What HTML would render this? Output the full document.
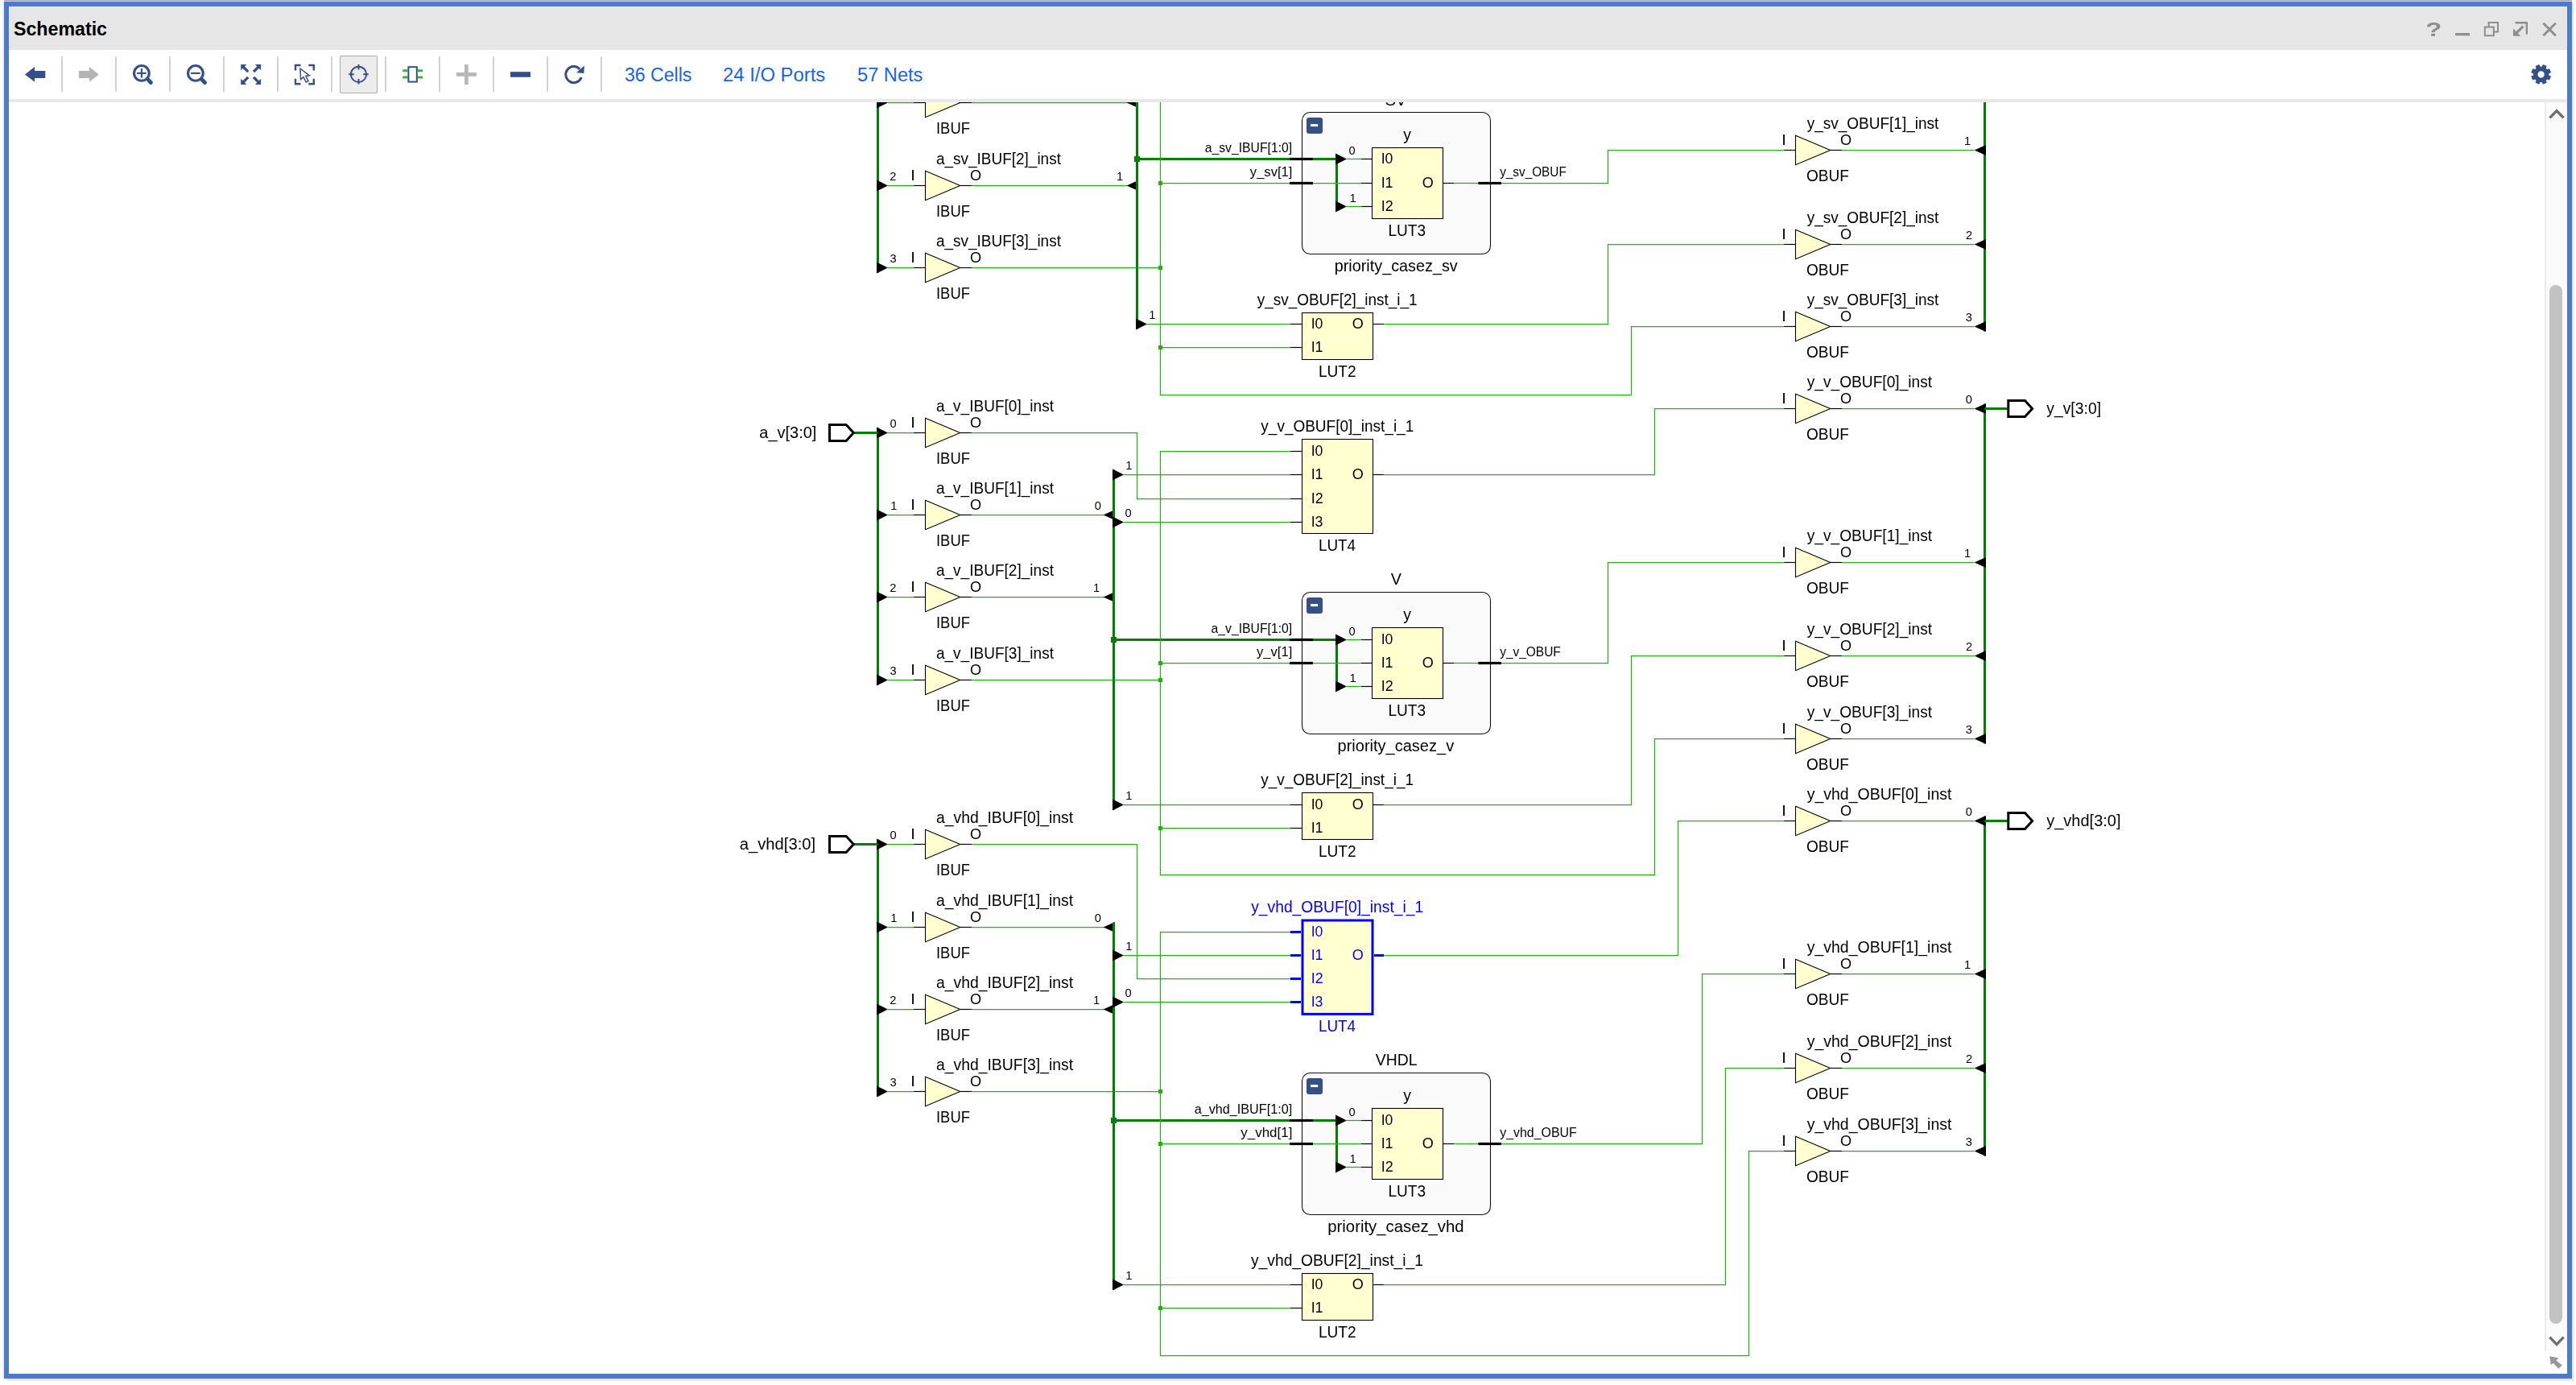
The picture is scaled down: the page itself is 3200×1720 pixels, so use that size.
<!DOCTYPE html>
<html><head><meta charset="utf-8"><title>Schematic</title>
<style>
html,body{margin:0;padding:0;background:#fff;overflow:hidden}
body{width:3200px;height:1720px;position:relative;font-family:"Liberation Sans",sans-serif}
.abs{position:absolute}
#frame{left:5px;top:2px;width:3190px;height:1710px;background:#4a7cce}
#shl{left:3px;top:2px;width:2px;height:1712px;background:linear-gradient(90deg,#f4f4f4,#e4e4e4)}
#sht{left:5px;top:0;width:3190px;height:1px;background:#a6a6a6}
#sht2{left:5px;top:1px;width:3190px;height:1px;background:#d6d6d2}
#shr{left:3195px;top:4px;width:3px;height:1712px;background:linear-gradient(90deg,#dcdcdc,#fafafa)}
#shb{left:8px;top:1712px;width:3188px;height:4px;background:linear-gradient(180deg,#d8d8d8,#fcfcfc)}
#title{left:11px;top:8px;width:3178px;height:54px;background:#e6e6e6}
#title b{position:absolute;left:5.6px;top:14.3px;font-size:24.6px;line-height:28px;font-weight:bold;color:#000;transform-origin:0 50%;transform:scaleX(0.943);white-space:nowrap}
#tool{left:11px;top:62px;width:3178px;height:61px;background:#fff}
#strip{left:11px;top:123px;width:3178px;height:4px;background:#e8e8e8}
#canvas{left:11px;top:127px;width:3178px;height:1579px;background:#fff}
.sep{position:absolute;top:70px;width:2px;height:44px;background:#d2d2d2}
#act{left:422px;top:69px;width:45px;height:45px;border:1px solid #ababab;background:#ececec;border-radius:2px}
.lnk{position:absolute;top:78.2px;font-size:24.2px;line-height:30px;color:#1463f0;white-space:nowrap;transform-origin:0 50%}
#sbar{left:3161px;top:127px;width:28px;height:1551px;background:#fafafa;border-left:2px solid #ebebeb;box-sizing:border-box}
#thumb{left:3167px;top:354px;width:16px;height:1290px;background:#c2c2c2;border-radius:8px}
svg{position:absolute;left:0;top:0;will-change:transform}
svg text{font-family:"Liberation Sans",sans-serif;white-space:pre}
.w{fill:none;stroke:#1eb40e;stroke-width:1.25}
.bus{fill:none;stroke:#008000;stroke-width:3}
.bk{fill:none;stroke:#000;stroke-width:1.2}
.bl{fill:none;stroke:#0000ff;stroke-width:3}
.bar{fill:none;stroke:#000;stroke-width:3.2}
.ar{fill:#000}
.jn{fill:#1eb40e}
.jb{fill:#008000}
.cell{fill:#ffffd0;stroke:#000;stroke-width:1.1}
.hier{fill:#fafafa;stroke:#111;stroke-width:1.1}
.port{fill:#fff;stroke:#000;stroke-width:3;stroke-linejoin:miter}
</style></head><body>
<div class="abs" id="shl"></div><div class="abs" id="sht"></div><div class="abs" id="sht2"></div><div class="abs" id="shr"></div><div class="abs" id="shb"></div>
<div class="abs" id="frame"></div>
<div class="abs" id="title"><b>Schematic</b></div>
<div class="abs" id="tool"></div>
<div class="abs" id="strip"></div>
<div class="abs" id="canvas"></div>
<div class="abs" id="act"></div>
<div class="sep" style="left:76px"></div>
<div class="sep" style="left:143px"></div>
<div class="sep" style="left:210px"></div>
<div class="sep" style="left:277px"></div>
<div class="sep" style="left:344px"></div>
<div class="sep" style="left:411px"></div>
<div class="sep" style="left:478px"></div>
<div class="sep" style="left:545px"></div>
<div class="sep" style="left:612px"></div>
<div class="sep" style="left:679px"></div>
<div class="sep" style="left:746px"></div>
<span class="lnk" style="left:775.6px;transform:scaleX(0.953)">36 Cells</span>
<span class="lnk" style="left:897.9px;transform:scaleX(0.986)">24 I/O Ports</span>
<span class="lnk" style="left:1064.9px;transform:scaleX(0.977)">57 Nets</span>
<div class="abs" id="sbar"></div><div class="abs" id="thumb"></div>
<svg width="3200" height="1720" viewBox="0 0 3200 1720">
<defs><clipPath id="cv"><rect x="11" y="127" width="3150" height="1579"/></clipPath></defs>
<g><path fill="#34508a" d="M31 92.4L43 83V88H56.3V97H43V101.8Z"/>
<path fill="#b4b4b4" d="M122.8 92.4L110.8 83V88H98V97H110.8V101.8Z"/>
<circle cx="175.9" cy="90.9" r="9.35" fill="none" stroke="#34508a" stroke-width="3.1"/><path d="M184.5 99.5L187.4 102.4" stroke="#34508a" stroke-width="5" stroke-linecap="round"/><path d="M170.1 90.9H181.7" stroke="#34508a" stroke-width="2.1"/><path d="M175.9 85.1V96.7" stroke="#34508a" stroke-width="2.1"/>
<circle cx="242.9" cy="90.9" r="9.35" fill="none" stroke="#34508a" stroke-width="3.1"/><path d="M251.5 99.5L254.4 102.4" stroke="#34508a" stroke-width="5" stroke-linecap="round"/><path d="M237.1 90.9H248.7" stroke="#34508a" stroke-width="2.1"/>
<path d="M308.25 89.1L302.05 82.9" stroke="#34508a" stroke-width="3.4"/><path fill="#34508a" d="M299.2 80L306.4 80L299.2 87.2Z"/><path d="M315.05 89.1L321.25 82.9" stroke="#34508a" stroke-width="3.4"/><path fill="#34508a" d="M324.1 80L316.9 80L324.1 87.2Z"/><path d="M308.25 95.9L302.05 102.1" stroke="#34508a" stroke-width="3.4"/><path fill="#34508a" d="M299.2 105L306.4 105L299.2 97.8Z"/><path d="M315.05 95.9L321.25 102.1" stroke="#34508a" stroke-width="3.4"/><path fill="#34508a" d="M324.1 105L316.9 105L324.1 97.8Z"/>
<path fill="none" stroke="#34508a" stroke-width="2.4" d="M373.5 81H367V87.5"/><path fill="none" stroke="#34508a" stroke-width="2.4" d="M383.3 81H389.8V87.5"/><path fill="none" stroke="#34508a" stroke-width="2.4" d="M373.5 104.2H367V97.7"/><path fill="none" stroke="#34508a" stroke-width="2.4" d="M383.3 104.2H389.8V97.7"/><path fill="#fff" stroke="#34508a" stroke-width="1.5" stroke-linejoin="miter" d="M373 85.2L373.6 98.6L377 95.6L380.2 102L383 100.6L379.8 94.4L384.4 93.8Z"/>
<circle cx="445.5" cy="92.3" r="9.6" fill="none" stroke="#34508a" stroke-width="2"/><path stroke="#34508a" stroke-width="2" d="M445.5 80V86.6M445.5 98V104.6M433.2 92.3H439.8M451.2 92.3H457.8"/>
<path stroke="#3cb043" stroke-width="3" d="M500.2 87.7H506.5M500.2 95.9H506.5M518.7 87.7H525M518.7 95.9H525"/><rect x="507.4" y="83.2" width="10.4" height="18.4" fill="#fff" stroke="#34508a" stroke-width="2"/>
<path stroke="#b8b8b8" stroke-width="4.8" d="M567 92.3H592M579.4 80V105"/>
<rect x="634" y="89.2" width="25" height="6.6" fill="#34508a"/>
<path fill="none" stroke="#34508a" stroke-width="3" d="M722.2 96.02A10 10 0 1 1 720.23 85.91"/><path fill="#34508a" d="M725.9 81.6L725.3 91L716 90.2Z"/>
<path fill="#34508a" fill-rule="evenodd" d="M3166.25 93.41L3168.97 94.8L3167.05 99.45L3164.14 98.5L3162.7 99.94L3163.65 102.85L3159 104.77L3157.61 102.05L3155.59 102.05L3154.2 104.77L3149.55 102.85L3150.5 99.94L3149.06 98.5L3146.15 99.45L3144.23 94.8L3146.95 93.41L3146.95 91.39L3144.23 90L3146.15 85.35L3149.06 86.3L3150.5 84.86L3149.55 81.95L3154.2 80.03L3155.59 82.75L3157.61 82.75L3159 80.03L3163.65 81.95L3162.7 84.86L3164.14 86.3L3167.05 85.35L3168.97 90L3166.25 91.39ZM3156.6 88.3a4.1 4.1 0 1 0 0.01 0Z"/></g>
<g><text transform="translate(3013.15 44.8) scale(1.3282 1)" font-size="24.6" font-weight="bold" fill="#8e8e8e">?</text>
<rect x="3050" y="41" width="18" height="3.2" fill="#8e8e8e"/>
<path fill="none" stroke="#8e8e8e" stroke-width="2" d="M3091.6 33.4V28H3103V39.6H3097.6"/><rect x="3086.8" y="33.6" width="11" height="10.6" fill="none" stroke="#8e8e8e" stroke-width="2"/>
<path fill="none" stroke="#8e8e8e" stroke-width="2.4" d="M3124.6 28.2H3138.8V42.6"/><path stroke="#8e8e8e" stroke-width="3.2" d="M3134.4 32.6L3126.6 40.4"/><path fill="#8e8e8e" d="M3122 44.8V35.4L3131.4 44.8Z"/>
<path stroke="#8e8e8e" stroke-width="3" d="M3159.4 28.8L3174.8 44.2M3174.8 28.8L3159.4 44.2"/></g>
<g><path fill="none" stroke="#6e6e6e" stroke-width="3.4" d="M3167.4 146.4L3176 137.6L3184.6 146.4"/>
<path fill="none" stroke="#6e6e6e" stroke-width="3.4" d="M3167.4 1660.6L3176 1669.6L3184.6 1660.6"/>
<path fill="#989898" d="M3167.2 1684.2L3178.6 1686.6L3175.4 1689.4L3182.8 1695.6L3178.2 1699.8L3171.6 1692.8L3168.8 1695.2Z"/></g>
<g clip-path="url(#cv)">
<path class="bus" d="M1090.5 100L1090.5 338.5"/>
<path class="ar" d="M1089 120.5L1103 127.5L1089 134.5Z"/>
<path class="w" d="M1102.5 127.5L1135 127.5"/>
<path class="bk" d="M1135 127.5L1149.5 127.5"/>
<path class="bk" d="M1193 127.5L1207.5 127.5"/>
<path class="cell" d="M1149.5 109.3L1192.8 127.5L1149.5 145.7Z"/>
<text transform="translate(1131.3 120.9) scale(1.1364 1)" font-size="17.6">I</text>
<text transform="translate(1205.04 121.1) scale(1.0323 1)" font-size="17.6">O</text>
<text transform="translate(1162.89 100.8) scale(0.9355 1)" font-size="20.3">a_sv_IBUF[1]_inst</text>
<text transform="translate(1163 165.8) scale(0.9071 1)" font-size="20.3">IBUF</text>
<text transform="translate(1106.3 120.9) scale(1.0324 1)" font-size="14.2">1</text>
<path class="ar" d="M1089 223.5L1103 230.5L1089 237.5Z"/>
<path class="w" d="M1102.5 230.5L1135 230.5"/>
<path class="bk" d="M1135 230.5L1149.5 230.5"/>
<path class="bk" d="M1193 230.5L1207.5 230.5"/>
<path class="cell" d="M1149.5 212.3L1192.8 230.5L1149.5 248.7Z"/>
<text transform="translate(1131.3 223.9) scale(1.1364 1)" font-size="17.6">I</text>
<text transform="translate(1205.04 224.1) scale(1.0323 1)" font-size="17.6">O</text>
<text transform="translate(1162.89 203.8) scale(0.9355 1)" font-size="20.3">a_sv_IBUF[2]_inst</text>
<text transform="translate(1163 268.8) scale(0.9071 1)" font-size="20.3">IBUF</text>
<text transform="translate(1105.37 223.9) scale(1.0324 1)" font-size="14.2">2</text>
<path class="ar" d="M1089 325.5L1103 332.5L1089 339.5Z"/>
<path class="w" d="M1102.5 332.5L1135 332.5"/>
<path class="bk" d="M1135 332.5L1149.5 332.5"/>
<path class="bk" d="M1193 332.5L1207.5 332.5"/>
<path class="cell" d="M1149.5 314.3L1192.8 332.5L1149.5 350.7Z"/>
<text transform="translate(1131.3 325.9) scale(1.1364 1)" font-size="17.6">I</text>
<text transform="translate(1205.04 326.1) scale(1.0323 1)" font-size="17.6">O</text>
<text transform="translate(1162.89 305.8) scale(0.9355 1)" font-size="20.3">a_sv_IBUF[3]_inst</text>
<text transform="translate(1163 370.8) scale(0.9071 1)" font-size="20.3">IBUF</text>
<text transform="translate(1105.55 325.9) scale(1.0324 1)" font-size="14.2">3</text>
<path class="w" d="M1207.5 127.5L1400.5 127.5"/>
<path class="ar" d="M1414 121L1399.5 127.5L1414 134Z"/>
<text transform="translate(1388.71 120.9) scale(1.0324 1)" font-size="14.2">0</text>
<path class="w" d="M1207.5 230.5L1400.5 230.5"/>
<path class="ar" d="M1414 224L1399.5 230.5L1414 237Z"/>
<text transform="translate(1386.96 223.9) scale(1.0324 1)" font-size="14.2">1</text>
<path class="w" d="M1207.5 332.5L1441.5 332.5"/>
<path class="bus" d="M1412.5 100L1412.5 408.5"/>
<path class="bus" d="M1412.5 197.5L1630 197.5"/>
<rect class="jb" x="1409" y="194" width="7" height="7"/>
<path class="ar" d="M1411 395.5L1425 402.5L1411 409.5Z"/>
<text transform="translate(1427.3 395.7) scale(1.0324 1)" font-size="14.2">1</text>
<path class="w" d="M1424.5 402.5L1602.9 402.5"/>
<path class="w" d="M1441.5 100L1441.5 490.5L2026.5 490.5L2026.5 405.5L2216 405.5"/>
<path class="w" d="M1441.5 227.5L1603 227.5"/>
<path class="w" d="M1441.5 431.5L1602.9 431.5"/>
<rect class="jn" x="1439" y="225" width="5" height="5"/>
<rect class="jn" x="1439" y="330" width="5" height="5"/>
<rect class="jn" x="1439" y="429" width="5" height="5"/>
<rect class="hier" x="1617.5" y="139.5" width="234" height="176" rx="10" ry="10"/>
<rect x="1623" y="146" width="20" height="20" rx="3" fill="#354f87"/>
<rect x="1628" y="154.1" width="9.2" height="3" fill="#fff"/>
<rect class="cell" x="1704.5" y="183.5" width="88" height="88"/>
<path class="bk" d="M1691 197.5L1704.5 197.5"/>
<text transform="translate(1715.67 203.2) scale(1.0029 1)" font-size="17.6">I0</text>
<path class="bk" d="M1691 227.5L1704.5 227.5"/>
<text transform="translate(1715.64 233.2) scale(1.0174 1)" font-size="17.6">I1</text>
<path class="bk" d="M1691 256.5L1704.5 256.5"/>
<text transform="translate(1715.64 262.2) scale(1.0211 1)" font-size="17.6">I2</text>
<path class="bk" d="M1792.5 227.5L1806.1 227.5"/>
<text transform="translate(1766.74 233.3) scale(1.0240 1)" font-size="17.6">O</text>
<text transform="translate(1724.43 292.7) scale(0.9385 1)" font-size="20.3">LUT3</text>
<text transform="translate(1743.15 173.9) scale(0.9554 1)" font-size="20.3">y</text>
<path class="bus" d="M1630 197.5L1660.5 197.5"/>
<path class="bus" d="M1660.5 197.5L1660.5 256.5"/>
<path class="ar" d="M1659 190.5L1673 197.5L1659 204.5Z"/>
<path class="ar" d="M1659 249.5L1673 256.5L1659 263.5Z"/>
<path class="w" d="M1672.5 197.5L1691 197.5"/>
<path class="w" d="M1672.5 256.5L1691 256.5"/>
<path class="w" d="M1630 227.5L1691 227.5"/>
<text transform="translate(1675.61 191.5) scale(1.0324 1)" font-size="14.2">0</text>
<text transform="translate(1676.4 250.5) scale(1.0324 1)" font-size="14.2">1</text>
<path class="bar" d="M1602.2 197.5L1630.9 197.5"/>
<path class="bar" d="M1602.2 227.5L1630.9 227.5"/>
<path class="w" d="M1806.1 227.5L1837 227.5"/>
<path class="bar" d="M1836.4 227.5L1865 227.5"/>
<text transform="translate(1720.39 131) scale(0.9967 1)" font-size="20.3">SV</text>
<text transform="translate(1657.71 336.5) scale(0.9762 1)" font-size="20.3">priority_casez_sv</text>
<text transform="translate(1496.63 188.8) scale(0.9733 1)" font-size="16.2">a_sv_IBUF[1:0]</text>
<text transform="translate(1552.86 219.1) scale(1.0232 1)" font-size="16.2">y_sv[1]</text>
<text transform="translate(1863.16 218.9) scale(0.9466 1)" font-size="16.2">y_sv_OBUF</text>
<path class="w" d="M1864.5 227.5L1997.5 227.5L1997.5 186.5L2216 186.5"/>
<rect class="cell" x="1617.5" y="388.5" width="88" height="58"/>
<path class="bk" d="M1602.9 402.5L1617.5 402.5"/>
<text transform="translate(1628.67 408.2) scale(1.0029 1)" font-size="17.6">I0</text>
<path class="bk" d="M1602.9 431.5L1617.5 431.5"/>
<text transform="translate(1628.64 437.2) scale(1.0174 1)" font-size="17.6">I1</text>
<path class="bk" d="M1705.5 402.5L1719.1 402.5"/>
<text transform="translate(1679.74 408.3) scale(1.0240 1)" font-size="17.6">O</text>
<text transform="translate(1561.85 378.7) scale(0.9325 1)" font-size="20.3">y_sv_OBUF[2]_inst_i_1</text>
<text transform="translate(1637.93 467.7) scale(0.9394 1)" font-size="20.3">LUT2</text>
<path class="w" d="M1719.1 402.5L1997.5 402.5L1997.5 303.5L2216 303.5"/>
<path class="bus" d="M2465.5 100L2465.5 411.5"/>
<path class="bk" d="M2216 186.5L2230.5 186.5"/>
<path class="bk" d="M2274 186.5L2288.5 186.5"/>
<path class="cell" d="M2230.5 168.3L2273.8 186.5L2230.5 204.7Z"/>
<text transform="translate(2213.3 179.9) scale(1.1364 1)" font-size="17.6">I</text>
<text transform="translate(2286.04 180.1) scale(1.0323 1)" font-size="17.6">O</text>
<text transform="translate(2244.65 159.8) scale(0.9360 1)" font-size="20.3">y_sv_OBUF[1]_inst</text>
<text transform="translate(2243.99 224.8) scale(0.9394 1)" font-size="20.3">OBUF</text>
<path class="w" d="M2288.5 186.5L2452.5 186.5"/>
<path class="ar" d="M2467 180L2452.5 186.5L2467 193Z"/>
<text transform="translate(2439.96 179.9) scale(1.0324 1)" font-size="14.2">1</text>
<path class="bk" d="M2216 303.5L2230.5 303.5"/>
<path class="bk" d="M2274 303.5L2288.5 303.5"/>
<path class="cell" d="M2230.5 285.3L2273.8 303.5L2230.5 321.7Z"/>
<text transform="translate(2213.3 296.9) scale(1.1364 1)" font-size="17.6">I</text>
<text transform="translate(2286.04 297.1) scale(1.0323 1)" font-size="17.6">O</text>
<text transform="translate(2244.65 276.8) scale(0.9360 1)" font-size="20.3">y_sv_OBUF[2]_inst</text>
<text transform="translate(2243.99 341.8) scale(0.9394 1)" font-size="20.3">OBUF</text>
<path class="w" d="M2288.5 303.5L2452.5 303.5"/>
<path class="ar" d="M2467 297L2452.5 303.5L2467 310Z"/>
<text transform="translate(2441.9 296.9) scale(1.0324 1)" font-size="14.2">2</text>
<path class="bk" d="M2216 405.5L2230.5 405.5"/>
<path class="bk" d="M2274 405.5L2288.5 405.5"/>
<path class="cell" d="M2230.5 387.3L2273.8 405.5L2230.5 423.7Z"/>
<text transform="translate(2213.3 398.9) scale(1.1364 1)" font-size="17.6">I</text>
<text transform="translate(2286.04 399.1) scale(1.0323 1)" font-size="17.6">O</text>
<text transform="translate(2244.65 378.8) scale(0.9360 1)" font-size="20.3">y_sv_OBUF[3]_inst</text>
<text transform="translate(2243.99 443.8) scale(0.9394 1)" font-size="20.3">OBUF</text>
<path class="w" d="M2288.5 405.5L2452.5 405.5"/>
<path class="ar" d="M2467 399L2452.5 405.5L2467 412Z"/>
<text transform="translate(2441.79 398.9) scale(1.0324 1)" font-size="14.2">3</text>
<path class="bus" d="M1090.5 531.5L1090.5 850.5"/>
<path class="ar" d="M1089 530.5L1103 537.5L1089 544.5Z"/>
<path class="w" d="M1102.5 537.5L1135 537.5"/>
<path class="bk" d="M1135 537.5L1149.5 537.5"/>
<path class="bk" d="M1193 537.5L1207.5 537.5"/>
<path class="cell" d="M1149.5 519.3L1192.8 537.5L1149.5 555.7Z"/>
<text transform="translate(1131.3 530.9) scale(1.1364 1)" font-size="17.6">I</text>
<text transform="translate(1205.04 531.1) scale(1.0323 1)" font-size="17.6">O</text>
<text transform="translate(1162.89 510.8) scale(0.9387 1)" font-size="20.3">a_v_IBUF[0]_inst</text>
<text transform="translate(1163 575.8) scale(0.9071 1)" font-size="20.3">IBUF</text>
<text transform="translate(1105.51 530.9) scale(1.0324 1)" font-size="14.2">0</text>
<path class="ar" d="M1089 632.5L1103 639.5L1089 646.5Z"/>
<path class="w" d="M1102.5 639.5L1135 639.5"/>
<path class="bk" d="M1135 639.5L1149.5 639.5"/>
<path class="bk" d="M1193 639.5L1207.5 639.5"/>
<path class="cell" d="M1149.5 621.3L1192.8 639.5L1149.5 657.7Z"/>
<text transform="translate(1131.3 632.9) scale(1.1364 1)" font-size="17.6">I</text>
<text transform="translate(1205.04 633.1) scale(1.0323 1)" font-size="17.6">O</text>
<text transform="translate(1162.89 612.8) scale(0.9387 1)" font-size="20.3">a_v_IBUF[1]_inst</text>
<text transform="translate(1163 677.8) scale(0.9071 1)" font-size="20.3">IBUF</text>
<text transform="translate(1106.3 632.9) scale(1.0324 1)" font-size="14.2">1</text>
<path class="ar" d="M1089 734.5L1103 741.5L1089 748.5Z"/>
<path class="w" d="M1102.5 741.5L1135 741.5"/>
<path class="bk" d="M1135 741.5L1149.5 741.5"/>
<path class="bk" d="M1193 741.5L1207.5 741.5"/>
<path class="cell" d="M1149.5 723.3L1192.8 741.5L1149.5 759.7Z"/>
<text transform="translate(1131.3 734.9) scale(1.1364 1)" font-size="17.6">I</text>
<text transform="translate(1205.04 735.1) scale(1.0323 1)" font-size="17.6">O</text>
<text transform="translate(1162.89 714.8) scale(0.9387 1)" font-size="20.3">a_v_IBUF[2]_inst</text>
<text transform="translate(1163 779.8) scale(0.9071 1)" font-size="20.3">IBUF</text>
<text transform="translate(1105.37 734.9) scale(1.0324 1)" font-size="14.2">2</text>
<path class="ar" d="M1089 837.5L1103 844.5L1089 851.5Z"/>
<path class="w" d="M1102.5 844.5L1135 844.5"/>
<path class="bk" d="M1135 844.5L1149.5 844.5"/>
<path class="bk" d="M1193 844.5L1207.5 844.5"/>
<path class="cell" d="M1149.5 826.3L1192.8 844.5L1149.5 862.7Z"/>
<text transform="translate(1131.3 837.9) scale(1.1364 1)" font-size="17.6">I</text>
<text transform="translate(1205.04 838.1) scale(1.0323 1)" font-size="17.6">O</text>
<text transform="translate(1162.89 817.8) scale(0.9387 1)" font-size="20.3">a_v_IBUF[3]_inst</text>
<text transform="translate(1163 882.8) scale(0.9071 1)" font-size="20.3">IBUF</text>
<text transform="translate(1105.55 837.9) scale(1.0324 1)" font-size="14.2">3</text>
<path class="bus" d="M1060 537.5L1090.5 537.5"/>
<path class="port" d="M1030.5 527.5H1051.2L1060.3 537.5L1051.2 547.5H1030.5Z"/>
<text transform="translate(943.35 544.4) scale(0.9838 1)" font-size="20.3">a_v[3:0]</text>
<path class="w" d="M1207.5 537.5L1412.5 537.5L1412.5 619.5L1602.9 619.5"/>
<path class="w" d="M1207.5 639.5L1371.5 639.5"/>
<path class="ar" d="M1385 633L1370.5 639.5L1385 646Z"/>
<text transform="translate(1359.71 632.9) scale(1.0324 1)" font-size="14.2">0</text>
<path class="w" d="M1207.5 741.5L1371.5 741.5"/>
<path class="ar" d="M1385 735L1370.5 741.5L1385 748Z"/>
<text transform="translate(1357.96 734.9) scale(1.0324 1)" font-size="14.2">1</text>
<path class="w" d="M1207.5 844.5L1441.5 844.5"/>
<path class="bus" d="M1383.5 583.5L1383.5 1005.5"/>
<path class="bus" d="M1383.5 794.5L1630 794.5"/>
<rect class="jb" x="1380" y="791" width="7" height="7"/>
<path class="ar" d="M1382 582.5L1396 589.5L1382 596.5Z"/>
<path class="w" d="M1395.5 589.5L1602.9 589.5"/>
<text transform="translate(1398.3 582.7) scale(1.0324 1)" font-size="14.2">1</text>
<path class="ar" d="M1382 641.5L1396 648.5L1382 655.5Z"/>
<path class="w" d="M1395.5 648.5L1602.9 648.5"/>
<text transform="translate(1397.51 641.7) scale(1.0324 1)" font-size="14.2">0</text>
<path class="ar" d="M1382 992.5L1396 999.5L1382 1006.5Z"/>
<path class="w" d="M1395.5 999.5L1602.9 999.5"/>
<text transform="translate(1398.3 992.7) scale(1.0324 1)" font-size="14.2">1</text>
<path class="w" d="M1602.9 560.5L1441.5 560.5L1441.5 1086.5L2055.5 1086.5L2055.5 917.5L2216 917.5"/>
<path class="w" d="M1441.5 823.5L1603 823.5"/>
<path class="w" d="M1441.5 1028.5L1602.9 1028.5"/>
<rect class="jn" x="1439" y="821" width="5" height="5"/>
<rect class="jn" x="1439" y="842" width="5" height="5"/>
<rect class="jn" x="1439" y="1026" width="5" height="5"/>
<rect class="cell" x="1617.5" y="545.5" width="88" height="117"/>
<path class="bk" d="M1602.9 560.5L1617.5 560.5"/>
<text transform="translate(1628.67 566.2) scale(1.0029 1)" font-size="17.6">I0</text>
<path class="bk" d="M1602.9 589.5L1617.5 589.5"/>
<text transform="translate(1628.64 595.2) scale(1.0174 1)" font-size="17.6">I1</text>
<path class="bk" d="M1602.9 619.5L1617.5 619.5"/>
<text transform="translate(1628.64 625.2) scale(1.0211 1)" font-size="17.6">I2</text>
<path class="bk" d="M1602.9 648.5L1617.5 648.5"/>
<text transform="translate(1628.66 654.2) scale(1.0101 1)" font-size="17.6">I3</text>
<path class="bk" d="M1705.5 589.5L1719.1 589.5"/>
<text transform="translate(1679.74 595.3) scale(1.0240 1)" font-size="17.6">O</text>
<text transform="translate(1566.35 535.7) scale(0.9357 1)" font-size="20.3">y_v_OBUF[0]_inst_i_1</text>
<text transform="translate(1637.94 683.7) scale(0.9304 1)" font-size="20.3">LUT4</text>
<path class="w" d="M1719.1 589.5L2055.5 589.5L2055.5 507.5L2216 507.5"/>
<rect class="hier" x="1617.5" y="735.5" width="234" height="176" rx="10" ry="10"/>
<rect x="1623" y="742" width="20" height="20" rx="3" fill="#354f87"/>
<rect x="1628" y="750.1" width="9.2" height="3" fill="#fff"/>
<rect class="cell" x="1704.5" y="779.5" width="88" height="88"/>
<path class="bk" d="M1691 794.5L1704.5 794.5"/>
<text transform="translate(1715.67 800.2) scale(1.0029 1)" font-size="17.6">I0</text>
<path class="bk" d="M1691 823.5L1704.5 823.5"/>
<text transform="translate(1715.64 829.2) scale(1.0174 1)" font-size="17.6">I1</text>
<path class="bk" d="M1691 852.5L1704.5 852.5"/>
<text transform="translate(1715.64 858.2) scale(1.0211 1)" font-size="17.6">I2</text>
<path class="bk" d="M1792.5 823.5L1806.1 823.5"/>
<text transform="translate(1766.74 829.3) scale(1.0240 1)" font-size="17.6">O</text>
<text transform="translate(1724.43 888.7) scale(0.9385 1)" font-size="20.3">LUT3</text>
<text transform="translate(1743.15 769.9) scale(0.9554 1)" font-size="20.3">y</text>
<path class="bus" d="M1630 794.5L1660.5 794.5"/>
<path class="bus" d="M1660.5 794.5L1660.5 852.5"/>
<path class="ar" d="M1659 787.5L1673 794.5L1659 801.5Z"/>
<path class="ar" d="M1659 845.5L1673 852.5L1659 859.5Z"/>
<path class="w" d="M1672.5 794.5L1691 794.5"/>
<path class="w" d="M1672.5 852.5L1691 852.5"/>
<path class="w" d="M1630 823.5L1691 823.5"/>
<text transform="translate(1675.61 788.5) scale(1.0324 1)" font-size="14.2">0</text>
<text transform="translate(1676.4 846.5) scale(1.0324 1)" font-size="14.2">1</text>
<path class="bar" d="M1602.2 794.5L1630.9 794.5"/>
<path class="bar" d="M1602.2 823.5L1630.9 823.5"/>
<path class="w" d="M1806.1 823.5L1837 823.5"/>
<path class="bar" d="M1836.4 823.5L1865 823.5"/>
<text transform="translate(1727.7 725.7) scale(0.9740 1)" font-size="20.3">V</text>
<text transform="translate(1661.5 932.5) scale(0.9866 1)" font-size="20.3">priority_casez_v</text>
<text transform="translate(1504.53 785.8) scale(0.9731 1)" font-size="16.2">a_v_IBUF[1:0]</text>
<text transform="translate(1560.96 815.1) scale(1.0276 1)" font-size="16.2">y_v[1]</text>
<text transform="translate(1863.16 814.9) scale(0.9563 1)" font-size="16.2">y_v_OBUF</text>
<path class="w" d="M1864.5 823.5L1997.5 823.5L1997.5 698.5L2216 698.5"/>
<rect class="cell" x="1617.5" y="984.5" width="88" height="58"/>
<path class="bk" d="M1602.9 999.5L1617.5 999.5"/>
<text transform="translate(1628.67 1005.2) scale(1.0029 1)" font-size="17.6">I0</text>
<path class="bk" d="M1602.9 1028.5L1617.5 1028.5"/>
<text transform="translate(1628.64 1034.2) scale(1.0174 1)" font-size="17.6">I1</text>
<path class="bk" d="M1705.5 999.5L1719.1 999.5"/>
<text transform="translate(1679.74 1005.3) scale(1.0240 1)" font-size="17.6">O</text>
<text transform="translate(1566.15 974.7) scale(0.9357 1)" font-size="20.3">y_v_OBUF[2]_inst_i_1</text>
<text transform="translate(1637.93 1063.7) scale(0.9394 1)" font-size="20.3">LUT2</text>
<path class="w" d="M1719.1 999.5L2026.5 999.5L2026.5 814.5L2216 814.5"/>
<path class="bus" d="M2465.5 501.5L2465.5 923.5"/>
<path class="bk" d="M2216 507.5L2230.5 507.5"/>
<path class="bk" d="M2274 507.5L2288.5 507.5"/>
<path class="cell" d="M2230.5 489.3L2273.8 507.5L2230.5 525.7Z"/>
<text transform="translate(2213.3 500.9) scale(1.1364 1)" font-size="17.6">I</text>
<text transform="translate(2286.04 501.1) scale(1.0323 1)" font-size="17.6">O</text>
<text transform="translate(2244.65 480.8) scale(0.9445 1)" font-size="20.3">y_v_OBUF[0]_inst</text>
<text transform="translate(2243.99 545.8) scale(0.9394 1)" font-size="20.3">OBUF</text>
<path class="w" d="M2288.5 507.5L2452.5 507.5"/>
<path class="ar" d="M2467 501L2452.5 507.5L2467 514Z"/>
<text transform="translate(2441.71 500.9) scale(1.0324 1)" font-size="14.2">0</text>
<path class="bk" d="M2216 698.5L2230.5 698.5"/>
<path class="bk" d="M2274 698.5L2288.5 698.5"/>
<path class="cell" d="M2230.5 680.3L2273.8 698.5L2230.5 716.7Z"/>
<text transform="translate(2213.3 691.9) scale(1.1364 1)" font-size="17.6">I</text>
<text transform="translate(2286.04 692.1) scale(1.0323 1)" font-size="17.6">O</text>
<text transform="translate(2244.65 671.8) scale(0.9445 1)" font-size="20.3">y_v_OBUF[1]_inst</text>
<text transform="translate(2243.99 736.8) scale(0.9394 1)" font-size="20.3">OBUF</text>
<path class="w" d="M2288.5 698.5L2452.5 698.5"/>
<path class="ar" d="M2467 692L2452.5 698.5L2467 705Z"/>
<text transform="translate(2439.96 691.9) scale(1.0324 1)" font-size="14.2">1</text>
<path class="bk" d="M2216 814.5L2230.5 814.5"/>
<path class="bk" d="M2274 814.5L2288.5 814.5"/>
<path class="cell" d="M2230.5 796.3L2273.8 814.5L2230.5 832.7Z"/>
<text transform="translate(2213.3 807.9) scale(1.1364 1)" font-size="17.6">I</text>
<text transform="translate(2286.04 808.1) scale(1.0323 1)" font-size="17.6">O</text>
<text transform="translate(2244.65 787.8) scale(0.9445 1)" font-size="20.3">y_v_OBUF[2]_inst</text>
<text transform="translate(2243.99 852.8) scale(0.9394 1)" font-size="20.3">OBUF</text>
<path class="w" d="M2288.5 814.5L2452.5 814.5"/>
<path class="ar" d="M2467 808L2452.5 814.5L2467 821Z"/>
<text transform="translate(2441.9 807.9) scale(1.0324 1)" font-size="14.2">2</text>
<path class="bk" d="M2216 917.5L2230.5 917.5"/>
<path class="bk" d="M2274 917.5L2288.5 917.5"/>
<path class="cell" d="M2230.5 899.3L2273.8 917.5L2230.5 935.7Z"/>
<text transform="translate(2213.3 910.9) scale(1.1364 1)" font-size="17.6">I</text>
<text transform="translate(2286.04 911.1) scale(1.0323 1)" font-size="17.6">O</text>
<text transform="translate(2244.65 890.8) scale(0.9445 1)" font-size="20.3">y_v_OBUF[3]_inst</text>
<text transform="translate(2243.99 955.8) scale(0.9394 1)" font-size="20.3">OBUF</text>
<path class="w" d="M2288.5 917.5L2452.5 917.5"/>
<path class="ar" d="M2467 911L2452.5 917.5L2467 924Z"/>
<text transform="translate(2441.79 910.9) scale(1.0324 1)" font-size="14.2">3</text>
<path class="bus" d="M2465.5 507.5L2494 507.5"/>
<path class="port" d="M2494.8 497.5H2515.5L2524.6 507.5L2515.5 517.5H2494.8Z"/>
<text transform="translate(2542.25 514.4) scale(0.9536 1)" font-size="20.3">y_v[3:0]</text>
<path class="bus" d="M1090.5 1042.5L1090.5 1361.5"/>
<path class="ar" d="M1089 1041.5L1103 1048.5L1089 1055.5Z"/>
<path class="w" d="M1102.5 1048.5L1135 1048.5"/>
<path class="bk" d="M1135 1048.5L1149.5 1048.5"/>
<path class="bk" d="M1193 1048.5L1207.5 1048.5"/>
<path class="cell" d="M1149.5 1030.3L1192.8 1048.5L1149.5 1066.7Z"/>
<text transform="translate(1131.3 1041.9) scale(1.1364 1)" font-size="17.6">I</text>
<text transform="translate(1205.04 1042.1) scale(1.0323 1)" font-size="17.6">O</text>
<text transform="translate(1162.88 1021.8) scale(0.9556 1)" font-size="20.3">a_vhd_IBUF[0]_inst</text>
<text transform="translate(1163 1086.8) scale(0.9071 1)" font-size="20.3">IBUF</text>
<text transform="translate(1105.51 1041.9) scale(1.0324 1)" font-size="14.2">0</text>
<path class="ar" d="M1089 1144.5L1103 1151.5L1089 1158.5Z"/>
<path class="w" d="M1102.5 1151.5L1135 1151.5"/>
<path class="bk" d="M1135 1151.5L1149.5 1151.5"/>
<path class="bk" d="M1193 1151.5L1207.5 1151.5"/>
<path class="cell" d="M1149.5 1133.3L1192.8 1151.5L1149.5 1169.7Z"/>
<text transform="translate(1131.3 1144.9) scale(1.1364 1)" font-size="17.6">I</text>
<text transform="translate(1205.04 1145.1) scale(1.0323 1)" font-size="17.6">O</text>
<text transform="translate(1162.88 1124.8) scale(0.9556 1)" font-size="20.3">a_vhd_IBUF[1]_inst</text>
<text transform="translate(1163 1189.8) scale(0.9071 1)" font-size="20.3">IBUF</text>
<text transform="translate(1106.3 1144.9) scale(1.0324 1)" font-size="14.2">1</text>
<path class="ar" d="M1089 1246.5L1103 1253.5L1089 1260.5Z"/>
<path class="w" d="M1102.5 1253.5L1135 1253.5"/>
<path class="bk" d="M1135 1253.5L1149.5 1253.5"/>
<path class="bk" d="M1193 1253.5L1207.5 1253.5"/>
<path class="cell" d="M1149.5 1235.3L1192.8 1253.5L1149.5 1271.7Z"/>
<text transform="translate(1131.3 1246.9) scale(1.1364 1)" font-size="17.6">I</text>
<text transform="translate(1205.04 1247.1) scale(1.0323 1)" font-size="17.6">O</text>
<text transform="translate(1162.88 1226.8) scale(0.9556 1)" font-size="20.3">a_vhd_IBUF[2]_inst</text>
<text transform="translate(1163 1291.8) scale(0.9071 1)" font-size="20.3">IBUF</text>
<text transform="translate(1105.37 1246.9) scale(1.0324 1)" font-size="14.2">2</text>
<path class="ar" d="M1089 1348.5L1103 1355.5L1089 1362.5Z"/>
<path class="w" d="M1102.5 1355.5L1135 1355.5"/>
<path class="bk" d="M1135 1355.5L1149.5 1355.5"/>
<path class="bk" d="M1193 1355.5L1207.5 1355.5"/>
<path class="cell" d="M1149.5 1337.3L1192.8 1355.5L1149.5 1373.7Z"/>
<text transform="translate(1131.3 1348.9) scale(1.1364 1)" font-size="17.6">I</text>
<text transform="translate(1205.04 1349.1) scale(1.0323 1)" font-size="17.6">O</text>
<text transform="translate(1162.88 1328.8) scale(0.9556 1)" font-size="20.3">a_vhd_IBUF[3]_inst</text>
<text transform="translate(1163 1393.8) scale(0.9071 1)" font-size="20.3">IBUF</text>
<text transform="translate(1105.55 1348.9) scale(1.0324 1)" font-size="14.2">3</text>
<path class="bus" d="M1060 1048.5L1090.5 1048.5"/>
<path class="port" d="M1030.5 1038.5H1051.2L1060.3 1048.5L1051.2 1058.5H1030.5Z"/>
<text transform="translate(918.84 1055.4) scale(0.9944 1)" font-size="20.3">a_vhd[3:0]</text>
<path class="w" d="M1207.5 1048.5L1412.5 1048.5L1412.5 1215.5L1602.9 1215.5"/>
<path class="w" d="M1207.5 1151.5L1371.5 1151.5"/>
<path class="ar" d="M1385 1145L1370.5 1151.5L1385 1158Z"/>
<text transform="translate(1359.71 1144.9) scale(1.0324 1)" font-size="14.2">0</text>
<path class="w" d="M1207.5 1253.5L1371.5 1253.5"/>
<path class="ar" d="M1385 1247L1370.5 1253.5L1385 1260Z"/>
<text transform="translate(1357.96 1246.9) scale(1.0324 1)" font-size="14.2">1</text>
<path class="w" d="M1207.5 1355.5L1441.5 1355.5"/>
<path class="bus" d="M1383.5 1145.5L1383.5 1601.5"/>
<path class="bus" d="M1383.5 1391.5L1630 1391.5"/>
<rect class="jb" x="1380" y="1388" width="7" height="7"/>
<path class="ar" d="M1382 1179.5L1396 1186.5L1382 1193.5Z"/>
<path class="w" d="M1395.5 1186.5L1602.9 1186.5"/>
<text transform="translate(1398.3 1179.7) scale(1.0324 1)" font-size="14.2">1</text>
<path class="ar" d="M1382 1237.5L1396 1244.5L1382 1251.5Z"/>
<path class="w" d="M1395.5 1244.5L1602.9 1244.5"/>
<text transform="translate(1397.51 1237.7) scale(1.0324 1)" font-size="14.2">0</text>
<path class="ar" d="M1382 1588.5L1396 1595.5L1382 1602.5Z"/>
<path class="w" d="M1395.5 1595.5L1602.9 1595.5"/>
<text transform="translate(1398.3 1588.7) scale(1.0324 1)" font-size="14.2">1</text>
<path class="w" d="M1602.9 1157.5L1441.5 1157.5L1441.5 1683.5L2172.5 1683.5L2172.5 1429.5L2216 1429.5"/>
<path class="w" d="M1441.5 1420.5L1603 1420.5"/>
<path class="w" d="M1441.5 1624.5L1602.9 1624.5"/>
<rect class="jn" x="1439" y="1418" width="5" height="5"/>
<rect class="jn" x="1439" y="1353" width="5" height="5"/>
<rect class="jn" x="1439" y="1622" width="5" height="5"/>
<rect x="1618" y="1143" width="87" height="116.4" fill="#ffffd0" stroke="#0000ff" stroke-width="3"/>
<path class="bl" d="M1602.9 1157.5L1616 1157.5"/>
<text transform="translate(1628.67 1163.2) scale(1.0029 1)" font-size="17.6" fill="#0000ff">I0</text>
<path class="bl" d="M1602.9 1186.5L1616 1186.5"/>
<text transform="translate(1628.64 1192.2) scale(1.0174 1)" font-size="17.6" fill="#0000ff">I1</text>
<path class="bl" d="M1602.9 1215.5L1616 1215.5"/>
<text transform="translate(1628.64 1221.2) scale(1.0211 1)" font-size="17.6" fill="#0000ff">I2</text>
<path class="bl" d="M1602.9 1244.5L1616 1244.5"/>
<text transform="translate(1628.66 1250.2) scale(1.0101 1)" font-size="17.6" fill="#0000ff">I3</text>
<path class="bl" d="M1707 1186.5L1719.1 1186.5"/>
<text transform="translate(1679.74 1192.3) scale(1.0240 1)" font-size="17.6" fill="#0000ff">O</text>
<text transform="translate(1554.25 1132.7) scale(0.9485 1)" font-size="20.3" fill="#0000ff">y_vhd_OBUF[0]_inst_i_1</text>
<text transform="translate(1637.94 1280.7) scale(0.9304 1)" font-size="20.3" fill="#0000ff">LUT4</text>
<path class="w" d="M1719.1 1186.5L2084.5 1186.5L2084.5 1019.5L2216 1019.5"/>
<rect class="hier" x="1617.5" y="1332.5" width="234" height="176" rx="10" ry="10"/>
<rect x="1623" y="1339" width="20" height="20" rx="3" fill="#354f87"/>
<rect x="1628" y="1347.1" width="9.2" height="3" fill="#fff"/>
<rect class="cell" x="1704.5" y="1376.5" width="88" height="88"/>
<path class="bk" d="M1691 1391.5L1704.5 1391.5"/>
<text transform="translate(1715.67 1397.2) scale(1.0029 1)" font-size="17.6">I0</text>
<path class="bk" d="M1691 1420.5L1704.5 1420.5"/>
<text transform="translate(1715.64 1426.2) scale(1.0174 1)" font-size="17.6">I1</text>
<path class="bk" d="M1691 1449.5L1704.5 1449.5"/>
<text transform="translate(1715.64 1455.2) scale(1.0211 1)" font-size="17.6">I2</text>
<path class="bk" d="M1792.5 1420.5L1806.1 1420.5"/>
<text transform="translate(1766.74 1426.3) scale(1.0240 1)" font-size="17.6">O</text>
<text transform="translate(1724.43 1485.7) scale(0.9385 1)" font-size="20.3">LUT3</text>
<text transform="translate(1743.15 1366.9) scale(0.9554 1)" font-size="20.3">y</text>
<path class="bus" d="M1630 1391.5L1660.5 1391.5"/>
<path class="bus" d="M1660.5 1391.5L1660.5 1449.5"/>
<path class="ar" d="M1659 1384.5L1673 1391.5L1659 1398.5Z"/>
<path class="ar" d="M1659 1442.5L1673 1449.5L1659 1456.5Z"/>
<path class="w" d="M1672.5 1391.5L1691 1391.5"/>
<path class="w" d="M1672.5 1449.5L1691 1449.5"/>
<path class="w" d="M1630 1420.5L1691 1420.5"/>
<text transform="translate(1675.61 1385.5) scale(1.0324 1)" font-size="14.2">0</text>
<text transform="translate(1676.4 1443.5) scale(1.0324 1)" font-size="14.2">1</text>
<path class="bar" d="M1602.2 1391.5L1630.9 1391.5"/>
<path class="bar" d="M1602.2 1420.5L1630.9 1420.5"/>
<path class="w" d="M1806.1 1420.5L1837 1420.5"/>
<path class="bar" d="M1836.4 1420.5L1865 1420.5"/>
<text transform="translate(1708.7 1322.7) scale(0.9553 1)" font-size="20.3">VHDL</text>
<text transform="translate(1649.28 1529.5) scale(1.0014 1)" font-size="20.3">priority_casez_vhd</text>
<text transform="translate(1483.71 1382.8) scale(1.0003 1)" font-size="16.2">a_vhd_IBUF[1:0]</text>
<text transform="translate(1541.26 1412.1) scale(1.0473 1)" font-size="16.2">y_vhd[1]</text>
<text transform="translate(1863.16 1411.9) scale(0.9850 1)" font-size="16.2">y_vhd_OBUF</text>
<path class="w" d="M1864.5 1420.5L2114.5 1420.5L2114.5 1209.5L2216 1209.5"/>
<rect class="cell" x="1617.5" y="1581.5" width="88" height="58"/>
<path class="bk" d="M1602.9 1595.5L1617.5 1595.5"/>
<text transform="translate(1628.67 1601.2) scale(1.0029 1)" font-size="17.6">I0</text>
<path class="bk" d="M1602.9 1624.5L1617.5 1624.5"/>
<text transform="translate(1628.64 1630.2) scale(1.0174 1)" font-size="17.6">I1</text>
<path class="bk" d="M1705.5 1595.5L1719.1 1595.5"/>
<text transform="translate(1679.74 1601.3) scale(1.0240 1)" font-size="17.6">O</text>
<text transform="translate(1554.05 1571.7) scale(0.9485 1)" font-size="20.3">y_vhd_OBUF[2]_inst_i_1</text>
<text transform="translate(1637.93 1660.7) scale(0.9394 1)" font-size="20.3">LUT2</text>
<path class="w" d="M1719.1 1595.5L2143.5 1595.5L2143.5 1326.5L2216 1326.5"/>
<path class="bus" d="M2465.5 1013.5L2465.5 1435.5"/>
<path class="bk" d="M2216 1019.5L2230.5 1019.5"/>
<path class="bk" d="M2274 1019.5L2288.5 1019.5"/>
<path class="cell" d="M2230.5 1001.3L2273.8 1019.5L2230.5 1037.7Z"/>
<text transform="translate(2213.3 1012.9) scale(1.1364 1)" font-size="17.6">I</text>
<text transform="translate(2286.04 1013.1) scale(1.0323 1)" font-size="17.6">O</text>
<text transform="translate(2244.65 992.8) scale(0.9604 1)" font-size="20.3">y_vhd_OBUF[0]_inst</text>
<text transform="translate(2243.99 1057.8) scale(0.9394 1)" font-size="20.3">OBUF</text>
<path class="w" d="M2288.5 1019.5L2452.5 1019.5"/>
<path class="ar" d="M2467 1013L2452.5 1019.5L2467 1026Z"/>
<text transform="translate(2441.71 1012.9) scale(1.0324 1)" font-size="14.2">0</text>
<path class="bk" d="M2216 1209.5L2230.5 1209.5"/>
<path class="bk" d="M2274 1209.5L2288.5 1209.5"/>
<path class="cell" d="M2230.5 1191.3L2273.8 1209.5L2230.5 1227.7Z"/>
<text transform="translate(2213.3 1202.9) scale(1.1364 1)" font-size="17.6">I</text>
<text transform="translate(2286.04 1203.1) scale(1.0323 1)" font-size="17.6">O</text>
<text transform="translate(2244.65 1182.8) scale(0.9604 1)" font-size="20.3">y_vhd_OBUF[1]_inst</text>
<text transform="translate(2243.99 1247.8) scale(0.9394 1)" font-size="20.3">OBUF</text>
<path class="w" d="M2288.5 1209.5L2452.5 1209.5"/>
<path class="ar" d="M2467 1203L2452.5 1209.5L2467 1216Z"/>
<text transform="translate(2439.96 1202.9) scale(1.0324 1)" font-size="14.2">1</text>
<path class="bk" d="M2216 1326.5L2230.5 1326.5"/>
<path class="bk" d="M2274 1326.5L2288.5 1326.5"/>
<path class="cell" d="M2230.5 1308.3L2273.8 1326.5L2230.5 1344.7Z"/>
<text transform="translate(2213.3 1319.9) scale(1.1364 1)" font-size="17.6">I</text>
<text transform="translate(2286.04 1320.1) scale(1.0323 1)" font-size="17.6">O</text>
<text transform="translate(2244.65 1299.8) scale(0.9604 1)" font-size="20.3">y_vhd_OBUF[2]_inst</text>
<text transform="translate(2243.99 1364.8) scale(0.9394 1)" font-size="20.3">OBUF</text>
<path class="w" d="M2288.5 1326.5L2452.5 1326.5"/>
<path class="ar" d="M2467 1320L2452.5 1326.5L2467 1333Z"/>
<text transform="translate(2441.9 1319.9) scale(1.0324 1)" font-size="14.2">2</text>
<path class="bk" d="M2216 1429.5L2230.5 1429.5"/>
<path class="bk" d="M2274 1429.5L2288.5 1429.5"/>
<path class="cell" d="M2230.5 1411.3L2273.8 1429.5L2230.5 1447.7Z"/>
<text transform="translate(2213.3 1422.9) scale(1.1364 1)" font-size="17.6">I</text>
<text transform="translate(2286.04 1423.1) scale(1.0323 1)" font-size="17.6">O</text>
<text transform="translate(2244.65 1402.8) scale(0.9604 1)" font-size="20.3">y_vhd_OBUF[3]_inst</text>
<text transform="translate(2243.99 1467.8) scale(0.9394 1)" font-size="20.3">OBUF</text>
<path class="w" d="M2288.5 1429.5L2452.5 1429.5"/>
<path class="ar" d="M2467 1423L2452.5 1429.5L2467 1436Z"/>
<text transform="translate(2441.79 1422.9) scale(1.0324 1)" font-size="14.2">3</text>
<path class="bus" d="M2465.5 1019.5L2494 1019.5"/>
<path class="port" d="M2494.8 1009.5H2515.5L2524.6 1019.5L2515.5 1029.5H2494.8Z"/>
<text transform="translate(2542.25 1026.4) scale(0.9858 1)" font-size="20.3">y_vhd[3:0]</text>
</g>
</svg>
</body></html>
